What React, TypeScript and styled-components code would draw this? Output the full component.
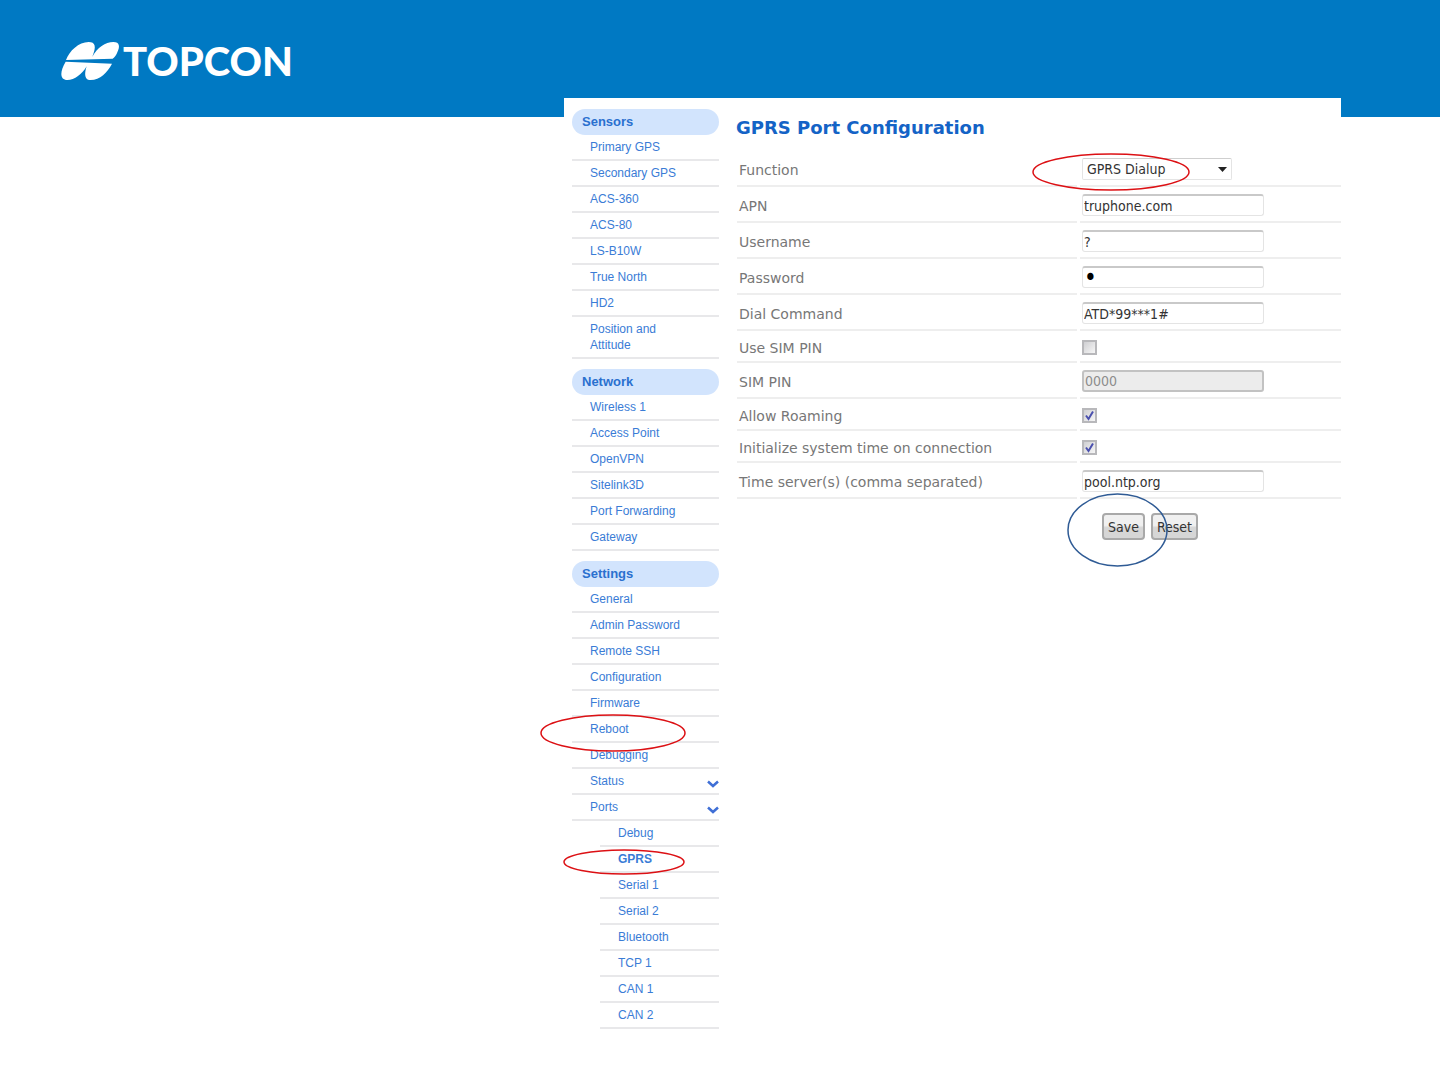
import React from "react";
import styled, { createGlobalStyle, css } from "styled-components";

const GlobalStyle = createGlobalStyle`
  *, *::before, *::after { box-sizing: border-box; }
  body { margin: 0; background: #fff; font-family: "Liberation Sans", Arial, sans-serif; }
`;

const Header = styled.header`
  display: flex;
  align-items: center;
  height: 117px;
  padding: 4px 60px 0;
  background: #0079c3;
`;

const Brand = styled.a`
  display: flex;
  align-items: center;
  gap: 3px;
  color: #fff;
  text-decoration: none;
`;

const Mark = styled.svg`
  width: 60px;
  height: 40px;
  fill: currentColor;
`;

const Wordmark = styled.span`
  font: 900 40px/44px Lato, sans-serif;
`;

const Main = styled.main`
  padding: 0 99px 0 564px;
`;

const Panel = styled.div`
  position: relative;
  display: flex;
  gap: 17px;
  margin-top: -19px;
  padding: 11px 0 48px 8px;
  background: #fff;
`;

const Sidebar = styled.nav`
  display: flex;
  flex: none;
  flex-direction: column;
  gap: 10px;
  width: 147px;
`;

const GroupTitle = styled.h2`
  height: 26px;
  margin: 0;
  padding: 0 10px;
  border-radius: 13px;
  background: #d2e4fd;
  color: #2a70cf;
  font-size: 13px;
  font-weight: 700;
  line-height: 26px;
`;

const List = styled.ul<{ $nested?: boolean }>`
  margin: 0;
  padding: 0 0 0 ${(p) => (p.$nested ? "28px" : "0")};
  list-style: none;
`;

const Item = styled.li`
  position: relative;
`;

const ItemLink = styled.a<{ $active?: boolean }>`
  display: flex;
  align-items: center;
  justify-content: space-between;
  min-height: 26px;
  padding: 4px 0 4px 18px;
  border-bottom: 2px solid #e8e8ea;
  color: #3a7cd6;
  font-size: 12px;
  font-weight: ${(p) => (p.$active ? 700 : 400)};
  line-height: 16px;
  text-decoration: none;
`;

const LinkText = styled.span`
  max-width: 100px;
`;

const Chevron = styled.svg`
  width: 12px;
  height: 8px;
  margin-top: 6px;
  fill: none;
  stroke: #3f6fd6;
  stroke-width: 2.5;
`;

const Content = styled.section`
  flex: 1;
  min-width: 0;
  padding-top: 7px;
`;

const Title = styled.h1`
  margin: 0 0 11px;
  color: #1463c6;
  font: 700 18px/24px "DejaVu Sans", Verdana, sans-serif;
`;

const Row = styled.div<{ $compact?: boolean }>`
  display: grid;
  grid-template-columns: 340px 1fr;
  gap: 3px;
  height: ${(p) => (p.$compact ? "32px" : "36px")};
  margin-left: 1px;
`;

const cell = css`
  display: flex;
  align-items: center;
  border-bottom: 2px solid #eeeeee;
`;

const Label = styled.label`
  ${cell}
  padding: 4px 0 0 2px;
  color: #777;
  font: 14px/18px "DejaVu Sans", Verdana, sans-serif;
  white-space: nowrap;
`;

const Value = styled.div`
  ${cell}
  position: relative;
  padding: 2px 0 0 2px;
`;

const fieldText = css`
  color: #333;
  font: 14px/18px "DejaVu Sans Condensed", Tahoma, "DejaVu Sans", sans-serif;
`;

const TextField = styled.input`
  ${fieldText}
  width: 182px;
  height: 22px;
  margin: 0;
  padding: 0 1px;
  border: 1px solid #e4e4e4;
  border-top: 2px solid #c9c9c9;
  border-radius: 3px;
  background: #fff;

  &[type="password"] {
    color: #000;
    font-size: 24px;
  }

  &:disabled {
    border: 2px solid #c2c2c2;
    background: #ececec;
    color: #8c8c8c;
  }
`;

const SelectWrap = styled.div`
  position: relative;
  display: flex;
`;

const Select = styled.select`
  ${fieldText}
  appearance: none;
  width: 150px;
  height: 22px;
  padding: 0 4px;
  border: 1px solid #e4e4e4;
  border-top-color: #cfcfcf;
  border-radius: 2px;
  background: #fff;
`;

const Arrow = styled.svg`
  position: absolute;
  top: 9px;
  right: 5px;
  width: 9px;
  height: 5px;
  fill: #222;
  pointer-events: none;
`;

const CheckWrap = styled.span`
  position: relative;
  display: flex;
`;

const Checkbox = styled.input`
  appearance: none;
  width: 15px;
  height: 15px;
  margin: 0;
  border: 2px solid #b8b8bb;
  background: linear-gradient(135deg, #cfcfd2, #f6f6f6);

  & + svg { display: none; }
  &:checked + svg { display: block; }
`;

const Tick = styled.svg`
  position: absolute;
  inset: 0;
  width: 15px;
  height: 15px;
  fill: none;
  stroke: #4a50ae;
  stroke-width: 2;
  pointer-events: none;
`;

const Actions = styled.div`
  position: relative;
  display: flex;
  gap: 6px;
  margin: 14px 0 0 366px;
`;

const Button = styled.button`
  ${fieldText}
  height: 27px;
  padding: 0 4px;
  border: 2px solid #a9a9a9;
  border-radius: 4px;
  background: linear-gradient(#f0f0f0 45%, #d6d6d6 55%);
`;

const RingBox = styled.svg<{ $x: number; $y: number; $w: number; $h: number; $tone: string }>`
  position: absolute;
  z-index: 1;
  left: ${(p) => p.$x}px;
  top: ${(p) => p.$y}px;
  width: ${(p) => p.$w}px;
  height: ${(p) => p.$h}px;
  overflow: visible;
  fill: none;
  stroke: ${(p) => p.$tone};
  stroke-width: 1.5;
  pointer-events: none;
`;

type RingSpec = { x: number; y: number; w: number; h: number; tone?: string };

const Ring = ({ x, y, w, h, tone = "#dc1014" }: RingSpec) => (
  <RingBox $x={x} $y={y} $w={w} $h={h} $tone={tone} aria-hidden="true">
    <ellipse cx="50%" cy="50%" rx="50%" ry="50%" />
  </RingBox>
);

type Entry = { text: string; ring?: RingSpec; active?: boolean; expandable?: boolean; children?: Entry[] };

const groups: { title: string; entries: Entry[] }[] = [
  {
    title: "Sensors",
    entries: [
      { text: "Primary GPS" },
      { text: "Secondary GPS" },
      { text: "ACS-360" },
      { text: "ACS-80" },
      { text: "LS-B10W" },
      { text: "True North" },
      { text: "HD2" },
      { text: "Position and Attitude" },
    ],
  },
  {
    title: "Network",
    entries: [
      { text: "Wireless 1" },
      { text: "Access Point" },
      { text: "OpenVPN" },
      { text: "Sitelink3D" },
      { text: "Port Forwarding" },
      { text: "Gateway" },
    ],
  },
  {
    title: "Settings",
    entries: [
      { text: "General" },
      { text: "Admin Password" },
      { text: "Remote SSH" },
      { text: "Configuration" },
      { text: "Firmware" },
      { text: "Reboot", ring: { x: -31, y: -2, w: 144, h: 36 } },
      { text: "Debugging" },
      { text: "Status", expandable: true },
      {
        text: "Ports",
        expandable: true,
        children: [
          { text: "Debug" },
          { text: "GPRS", active: true, ring: { x: -36, y: 3, w: 120, h: 24 } },
          { text: "Serial 1" },
          { text: "Serial 2" },
          { text: "Bluetooth" },
          { text: "TCP 1" },
          { text: "CAN 1" },
          { text: "CAN 2" },
        ],
      },
    ],
  },
];

const Entries = ({ entries, nested }: { entries: Entry[]; nested?: boolean }) => (
  <List $nested={nested}>
    {entries.map((e) => (
      <Item key={e.text}>
        <ItemLink href="#" $active={e.active}>
          <LinkText>{e.text}</LinkText>
          {e.expandable && (
            <Chevron viewBox="0 0 12 8" aria-hidden="true">
              <path d="M1 1.5 6 6 11 1.5" />
            </Chevron>
          )}
        </ItemLink>
        {e.ring && <Ring {...e.ring} />}
        {e.children && <Entries entries={e.children} nested />}
      </Item>
    ))}
  </List>
);

const TextRow = ({ id, label, value, type = "text", disabled }: {
  id: string; label: string; value: string; type?: string; disabled?: boolean;
}) => (
  <Row>
    <Label htmlFor={id}>{label}</Label>
    <Value>
      <TextField id={id} type={type} defaultValue={value} disabled={disabled} />
    </Value>
  </Row>
);

const CheckRow = ({ id, label, checked }: { id: string; label: string; checked?: boolean }) => (
  <Row $compact>
    <Label htmlFor={id}>{label}</Label>
    <Value>
      <CheckWrap>
        <Checkbox id={id} type="checkbox" defaultChecked={checked} />
        <Tick viewBox="0 0 15 15" aria-hidden="true">
          <path d="M4 7.5 6.5 11 11 3.5" />
        </Tick>
      </CheckWrap>
    </Value>
  </Row>
);

export default function App() {
  return (
    <>
      <GlobalStyle />
      <Header>
        <Brand href="#">
          <Mark viewBox="0 0 180 120" aria-hidden="true">
            <path d="M18 57C28 30 56 3 86 3C106 3 110 16 97 47C112 20 136 3 160 3C180 3 180 18 172 34C169 42 164 50 158 53Z" />
            <path d="M17 62L156 68C142 94 120 117 92 117C74 117 72 100 80 76C66 100 44 117 22 117C0 117 -2 94 17 62Z" />
          </Mark>
          <Wordmark>TOPCON</Wordmark>
        </Brand>
      </Header>
      <Main>
        <Panel>
          <Sidebar>
            {groups.map((g) => (
              <div key={g.title}>
                <GroupTitle>{g.title}</GroupTitle>
                <Entries entries={g.entries} />
              </div>
            ))}
          </Sidebar>
          <Content>
            <Title>GPRS Port Configuration</Title>
            <form onSubmit={(e) => e.preventDefault()}>
              <Row>
                <Label htmlFor="function">Function</Label>
                <Value>
                  <SelectWrap>
                    <Select id="function" defaultValue="GPRS Dialup">
                      <option>GPRS Dialup</option>
                    </Select>
                    <Arrow viewBox="0 0 9 5" aria-hidden="true">
                      <path d="M0 0H9L4.5 5Z" />
                    </Arrow>
                  </SelectWrap>
                  <Ring x={-47} y={3} w={156} h={36} />
                </Value>
              </Row>
              <TextRow id="apn" label="APN" value="truphone.com" />
              <TextRow id="username" label="Username" value="?" />
              <TextRow id="password" label="Password" value="x" type="password" />
              <TextRow id="dial" label="Dial Command" value="ATD*99***1#" />
              <CheckRow id="use-pin" label="Use SIM PIN" />
              <TextRow id="pin" label="SIM PIN" value="0000" disabled />
              <CheckRow id="roaming" label="Allow Roaming" checked />
              <CheckRow id="init-time" label="Initialize system time on connection" checked />
              <TextRow id="ntp" label="Time server(s) (comma separated)" value="pool.ntp.org" />
              <Actions>
                <Button type="submit">Save</Button>
                <Button type="reset">Reset</Button>
                <Ring x={-34} y={-19} w={99} h={72} tone="#2f5b95" />
              </Actions>
            </form>
          </Content>
        </Panel>
      </Main>
    </>
  );
}
